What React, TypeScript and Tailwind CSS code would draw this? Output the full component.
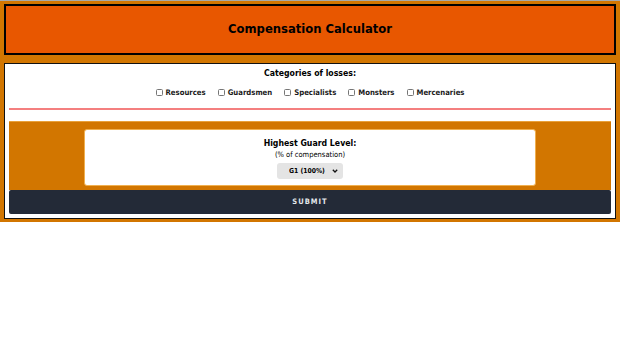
import React, { useState } from 'react';

const categories = ['Resources', 'Guardsmen', 'Specialists', 'Monsters', 'Mercenaries'];

export default function App() {
  const [checked, setChecked] = useState<Record<string, boolean>>({});
  const [level, setLevel] = useState('G1');

  return (
    <div className="min-h-screen bg-white" style={{ fontFamily: '"DejaVu Sans Condensed", "DejaVu Sans", Verdana, sans-serif' }}>
      <div className="bg-[#d27600] border-t border-[#a8a8a8] px-[4px] pt-[3px] pb-[3px]">
        {/* Header */}
        <div className="h-[51px] bg-[#e85700] border-2 border-black flex items-center justify-center">
          <h1 className="text-[12.9px] font-bold text-black leading-none">Compensation Calculator</h1>
        </div>

        {/* Form */}
        <div className="mt-[8px] bg-white border border-[#111] p-[4px]">
          <div className="text-center">
            <h2 className="text-[8.7px] font-bold text-black leading-[10px]">Categories of losses:</h2>
            <div className="mt-[8px] flex justify-center gap-[12px] h-[14px] items-center">
              {categories.map((c) => (
                <label key={c} className="flex items-center gap-[3px] text-[7.7px] font-bold text-[#1a1a1a] cursor-pointer leading-none">
                  <input
                    type="checkbox"
                    className="sr-only"
                    checked={!!checked[c]}
                    onChange={() => setChecked({ ...checked, [c]: !checked[c] })}
                  />
                  <span className="w-[7px] h-[7px] border border-[#767676] rounded-[1.5px] bg-white" />
                  {c}
                </label>
              ))}
            </div>
          </div>
          <div className="mt-[8px] h-[2px] bg-[#f47f7f]" />

          <div className="mt-[11px] bg-[#d27600] border-t border-[#e9a13a] pt-[7px] pb-[4px] flex justify-center">
            <div className="w-3/4 h-[57px] bg-white rounded-[3px] border border-[#f0b050] flex flex-col items-center pt-[8px]">
              <div className="text-[8.7px] font-bold text-black leading-[10px]">Highest Guard Level:</div>
              <div className="text-[7.5px] text-black leading-[10px] mt-[2px]">(% of compensation)</div>
              <div className="relative flex mt-[3px]">
                <select
                  value={level}
                  onChange={(e) => setLevel(e.target.value)}
                  className="appearance-none block w-[66px] h-[16px] bg-[#e4e4e4] rounded-[3px] text-[6.8px] font-bold text-black pl-[12px] pr-[12px] leading-[16px] py-0 outline-none"
                >
                  <option value="G1">G1 (100%)</option>
                  <option value="G2">G2 (75%)</option>
                  <option value="G3">G3 (50%)</option>
                </select>
                <svg className="absolute right-[5px] top-[6px] pointer-events-none" width="6" height="4" viewBox="0 0 6 4">
                  <path d="M0.8 0.8 L3 3 L5.2 0.8" stroke="#111" strokeWidth="1.3" fill="none" />
                </svg>
              </div>
            </div>
          </div>

          <button className="block w-full h-[24px] bg-[#232a37] text-[#e5e7eb] text-[7.5px] font-bold tracking-[1px] rounded-[2px] leading-none">
            SUBMIT
          </button>
        </div>
      </div>
    </div>
  );
}
